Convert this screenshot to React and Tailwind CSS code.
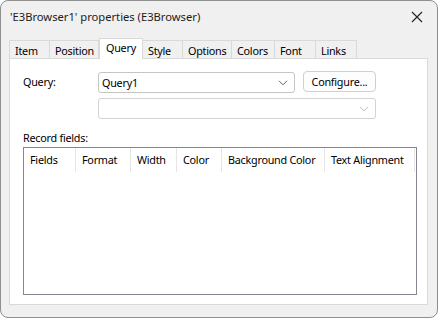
import React from "react";

const tabs = [
  { label: "Item", w: "w-[41px]" },
  { label: "Position", w: "w-[49px]" },
  { label: "Query", w: "w-[44px]", active: true },
  { label: "Style", w: "w-[40px]" },
  { label: "Options", w: "w-[49px]" },
  { label: "Colors", w: "w-[43px]" },
  { label: "Font", w: "w-[41px]" },
  { label: "Links", w: "w-[41px]" },
];

const columns = [
  { label: "Fields", w: "w-[52px]" },
  { label: "Format", w: "w-[55px]" },
  { label: "Width", w: "w-[46px]" },
  { label: "Color", w: "w-[45px]" },
  { label: "Background Color", w: "w-[103px]" },
  { label: "Text Alignment", w: "w-[90px]" },
];

const Chevron = ({ color = "#5f5f5f" }) => (
  <svg width="10" height="6" viewBox="0 0 10 6" fill="none">
    <path d="M1 0.8 L5 4.8 L9 0.8" stroke={color} strokeWidth="1" />
  </svg>
);

const App = () => {
  return (
    <div
      className="w-[438px] h-[318px] bg-[#f0f0f0] border border-[#8f8f8f] rounded-[8px] overflow-hidden text-[10.8px] tracking-[-0.25px] text-black flex flex-col whitespace-nowrap"
      style={{ fontFamily: '"Segoe UI", "Noto Sans", sans-serif' }}
    >
      {/* title bar */}
      <div className="h-[37px] flex items-center justify-between pl-[9px] pr-[14px]">
        <span className="text-[#1b1b1b] text-[11.2px] tracking-normal -mt-[5px]">'E3Browser1' properties (E3Browser)</span>
        <svg width="12" height="12" viewBox="0 0 12 12" className="-mt-[5px]">
          <path d="M1 1 L11 11 M11 1 L1 11" stroke="#222" strokeWidth="1.1" />
        </svg>
      </div>

      {/* tabs */}
      <div className="flex items-end h-[20px] ml-[8px] relative z-10">
        {tabs.map((t) =>
          t.active ? (
            <div
              key={t.label}
              className={`${t.w} h-[21px] -mb-[1px] bg-white border border-b-0 border-[#d9d9d9] pl-[6px] pt-[1px] leading-[16px]`}
            >
              {t.label}
            </div>
          ) : (
            <div
              key={t.label}
              className={`${t.w} h-[18px] bg-[#f0f0f0] border border-b-0 border-l-0 first:border-l border-[#d9d9d9] pl-[5px] pt-[2px] leading-[16px]`}
            >
              {t.label}
            </div>
          )
        )}
      </div>

      {/* panel */}
      <div className="ml-[8px] mr-[9px] h-[247px] bg-white border border-[#d9d9d9] pl-[13px] pr-[11px] pt-[13px]">
        <div className="flex">
          <div className="w-[75px] pt-[2px] leading-[16px]">Query:</div>
          <div className="flex flex-col gap-[5px]">
            <div className="flex gap-[8px]">
              <div className="w-[197px] h-[21px] border border-[#c5c5c5] rounded-[3px] bg-white flex items-center justify-between pl-[3px] pr-[6px]">
                <span className="leading-[16px]">Query1</span>
                <Chevron />
              </div>
              <div className="w-[73px] h-[21px] border border-[#d0d0d0] rounded-[4px] bg-[#fdfdfd] flex items-center justify-center leading-[16px] -mt-[1px]">
                Configure...
              </div>
            </div>
            <div className="w-[278px] h-[21px] border border-[#d3d3d3] rounded-[3px] bg-white flex items-center justify-end pr-[6px]">
              <Chevron color="#b9b9b9" />
            </div>
          </div>
        </div>

        <div className="mt-[11px] leading-[16px]">Record fields:</div>

        <div className="mt-[1px] w-[394px] h-[148px] border border-[#828790] bg-white">
          <div className="flex h-[24px] items-stretch">
            {columns.map((c) => (
              <div
                key={c.label}
                className={`${c.w} border-r border-[#e5e5e5] pl-[6px] flex items-center leading-[16px]`}
              >
                {c.label}
              </div>
            ))}
          </div>
        </div>
      </div>
    </div>
  );
};

export default App;
